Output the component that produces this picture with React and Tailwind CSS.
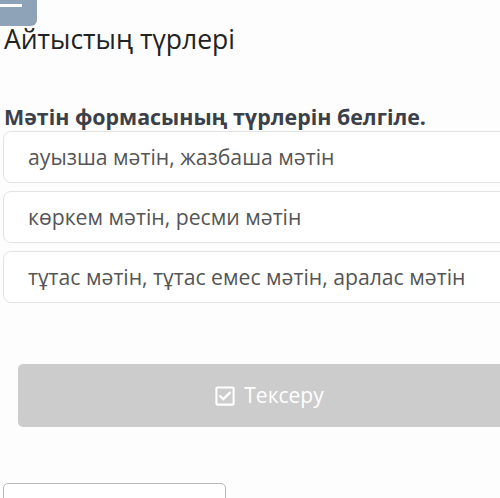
import React from 'react';
import { FaRegCheckSquare } from 'react-icons/fa';

const options = [
  'ауызша мәтін, жазбаша мәтін',
  'көркем мәтін, ресми мәтін',
  'тұтас мәтін, тұтас емес мәтін, аралас мәтін',
];

function OptionCard({ text }) {
  return (
    <div className="h-[52px] flex items-center pl-[24px] border border-[#e3e3e3] rounded-[8px] bg-white text-[21.2px] text-[#555] cursor-pointer">
      {text}
    </div>
  );
}

export default function App() {
  return (
    <div className="w-[500px] h-[498px] overflow-hidden bg-[#fdfdfd]" style={{ fontFamily: '"Open Sans", "Noto Sans", sans-serif' }}>
      <div className="w-[538px]">
        <div className="w-[37px] h-[26px] bg-[#8fa3b8] rounded-br-[6px] pt-[4px]">
          <div className="w-[22px] h-[3px] bg-white"></div>
        </div>
        <h1 className="mt-[1px] pl-[4px] text-[26.5px] leading-[25px] text-[#222]">Айтыстың түрлері</h1>
        <div className="px-[3px]">
          <p className="mt-[52px] pl-[1px] text-[21.4px] leading-[26px] font-bold text-[#3b4049]">Мәтін формасының түрлерін белгіле.</p>
          <div className="mt-[1px] flex flex-col gap-[8px]">
            {options.map(opt => <OptionCard key={opt} text={opt} />)}
          </div>
          <button className="mt-[61px] mx-[15px] w-[502px] h-[63px] rounded-[5px] bg-[#cccccc] text-white text-[21px] flex items-center justify-center gap-[8px]">
            <FaRegCheckSquare className="w-[22px] h-[22px]" />
            <span>Тексеру</span>
          </button>
          <div className="mt-[56px] w-[223px] h-[30px] border border-[#b8b8b8] rounded-[5px] bg-white"></div>
        </div>
      </div>
    </div>
  );
}
